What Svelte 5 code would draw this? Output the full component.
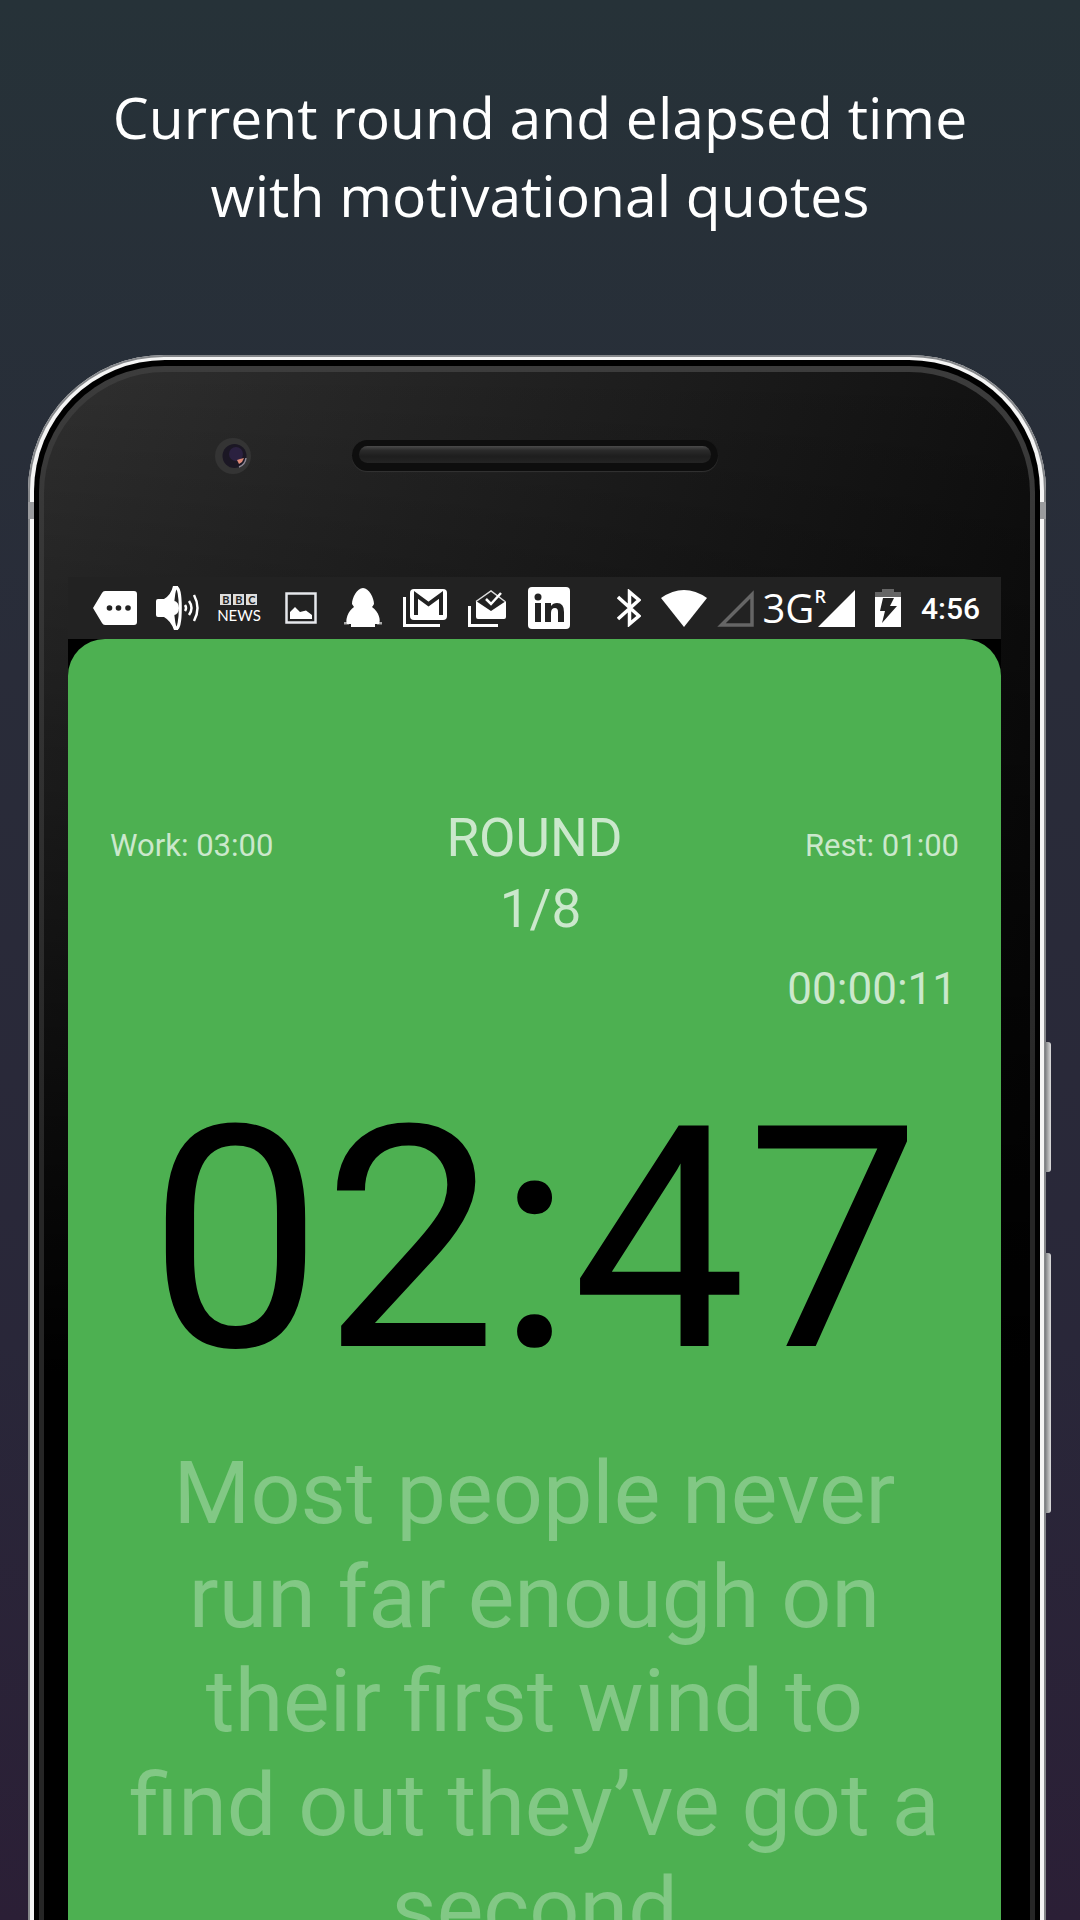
<script>
  const headline = ['Current round and elapsed time', 'with motivational quotes'];
  const quote = ['Most people never', 'run far enough on', 'their first wind to', 'find out they’ve got a', 'second'];
</script>

<main class="page">
  <h1 class="headline">
    {#each headline as line}<span>{line}</span>{/each}
  </h1>

  <div class="device">
    <i class="key power"></i>
    <i class="key volume"></i>
    <i class="seam left"></i>
    <i class="seam right"></i>
    <div class="metal">
      <div class="gasket">
        <div class="lip">
          <div class="face">
            <div class="top">
              <svg class="camera" viewBox="0 0 38 38" aria-hidden="true">
                <circle cx="19" cy="19" r="18" fill="#343434" />
                <circle cx="20.500" cy="19" r="12" fill="#1b1724" />
                <circle cx="22" cy="17" r="7" fill="#2b2140" />
                <path d="M32 21a11 11 0 0 1-7 9" fill="none" stroke="#8d8896" stroke-width="1.500" />
                <path d="M23 23l3-1 4-1-2 4-3 2z" fill="#e08a78" />
              </svg>
              <div class="speaker"><div class="grille"></div></div>
            </div>

            <div class="screen">
              <header class="status">
                <div class="notices">
                  <svg width="44" height="34" viewBox="0 0 44 34" aria-label="Messages">
                    <path d="M12 0H41a3 3 0 0 1 3 3V31a3 3 0 0 1-3 3H12Q10 34 9 32L0 17 9 2Q10 0 12 0Z" fill="#fff" />
                    <circle cx="16.500" cy="17" r="2.800" fill="#222" /><circle cx="25.500" cy="17" r="2.800" fill="#222" /><circle cx="35" cy="17" r="2.800" fill="#222" />
                  </svg>
                  <svg width="43" height="44" viewBox="0 0 43 44" aria-label="Sound">
                    <path d="M0 15Q0 13 2 13H8Q15 9 17 0H22V44H18Q15 35 8 31H2Q0 31 0 29Z" fill="#fff" />
                    <ellipse cx="20.500" cy="22" rx="3.800" ry="20.500" fill="#222" stroke="#fff" stroke-width="3" />
                    <path d="M18 15a5 7 0 0 1 0 14z" fill="#fff" />
                    <path d="M29 19q2 3 0 6M33 15q5 7 0 14M38 9q7 13 0 26" fill="none" stroke="#fff" stroke-width="2.500" />
                  </svg>
                  <div class="bbc"><span class="blocks"><b>B</b><b>B</b><b>C</b></span><span class="news">NEWS</span></div>
                  <svg width="32" height="32" viewBox="0 0 32 32" aria-label="Picture">
                    <rect x="1.500" y="1.500" width="29" height="29" fill="none" stroke="#e6e8ec" stroke-width="2.500" />
                    <path d="M5 27V20L10 15 15 20 21 18.500 27 23V27Z" fill="#fff" />
                  </svg>
                  <svg width="38" height="40" viewBox="0 0 38 40" aria-label="Snow figure">
                    <path d="M0 34H5V36.500H0ZM33 34H38V36.500H33Z" fill="#aaa" />
                    <path d="M19 0C25 0 30 10 30 16Q29 18 28 19C35 24 37 32 35 36H31V39H7V36H3C1 32 4 23 10 19L8 16C8 10 13 0 19 0Z" fill="#fff" />
                  </svg>
                  <svg width="44" height="38" viewBox="0 0 44 38" aria-label="Mail">
                    <path d="M1.500 8V36.500H37" fill="none" stroke="#fff" stroke-width="3" />
                    <rect x="7" y="0" width="37" height="31" rx="4" fill="#fff" />
                    <path d="M13 26V6L25.500 15 38 6V26" fill="none" stroke="#222" stroke-width="4" />
                  </svg>
                  <svg width="38" height="38" viewBox="0 0 38 38" aria-label="Inbox">
                    <path d="M1.500 17V36.500H30" fill="none" stroke="#fff" stroke-width="3" />
                    <path d="M8 12.500 23 2 37 12.500" fill="none" stroke="#ddd" stroke-width="1.500" />
                    <path d="M8 12 23 22 38 12V28Q38 30 36 30H10Q8 30 8 28Z" fill="#fff" />
                    <path d="M18 10l5 5L33 4" fill="none" stroke="#fff" stroke-width="2.500" />
                  </svg>
                  <svg width="42" height="42" viewBox="0 0 42 42" aria-label="LinkedIn">
                    <rect width="42" height="42" rx="4" fill="#fff" />
                    <circle cx="10" cy="10" r="3.500" fill="#222" />
                    <path d="M7 16h6v19H7zM17 16h6v3q2-3 6-3 7 0 7 9v10h-6V25q0-4-3-4-4 0-4 5v9h-6z" fill="#222" />
                  </svg>
                </div>
                <div class="system">
                  <svg width="24" height="38" viewBox="0 0 24 38" aria-label="Bluetooth">
                    <path d="M1 8 22 27 12.500 35V3L22 11 1 30" fill="none" stroke="#fff" stroke-width="3.500" />
                  </svg>
                  <svg width="46" height="37" viewBox="0 0 46 37" aria-label="Wi-Fi">
                    <path d="M0 8Q23-8 46 8L23 37Z" fill="#fff" />
                  </svg>
                  <div class="network">
                    <svg width="37" height="37" viewBox="0 0 37 37" aria-label="No signal">
                      <path d="M4.500 35H35V4.500Z" fill="none" stroke="#666" stroke-width="3.500" />
                    </svg>
                    <span class="threeg">3G</span><span class="roaming">R</span>
                    <svg class="signal" width="37" height="37" viewBox="0 0 37 37" aria-label="Signal">
                      <path d="M0 37H37V0Z" fill="#fff" />
                    </svg>
                  </div>
                  <svg width="26" height="38" viewBox="0 0 26 38" aria-label="Battery charging">
                    <path d="M0 3H7V0H19V3H26V8H0Z" fill="#666" />
                    <path d="M0 8H26V38H0Z" fill="#fff" />
                    <path d="M8 9H19L15 17H22L7 34 10 22H5Z" fill="#222" />
                  </svg>
                  <time class="clock">4:56</time>
                </div>
              </header>

              <section class="timer">
                <div class="row">
                  <span class="small">Work: 03:00</span>
                  <div class="round"><span>ROUND</span><span class="count">1/8</span></div>
                  <span class="small end">Rest: 01:00</span>
                </div>
                <time class="elapsed">00:00:11</time>
                <time class="remaining">02:47</time>
                <p class="quote">
                  {#each quote as line}<span>{line}</span>{/each}
                </p>
              </section>
            </div>
          </div>
        </div>
      </div>
    </div>
  </div>
</main>

<style>
  :global(body) { margin: 0; }
  .page {
    box-sizing: border-box;
    height: 100vh;
    overflow: hidden;
    display: flex;
    flex-direction: column;
    padding-top: 78px;
    gap: 121px;
    background: linear-gradient(#263238, #292c39 35%, #292739 70%, #2b1f36);
    font-family: Roboto, sans-serif;
    color: #fff;
  }
  .headline {
    margin: 0;
    font: 400 57px/78px "Open Sans", sans-serif;
    text-align: center;
  }
  .headline span, .quote span { display: block; }
  .device {
    flex: 1 0 auto;
    display: flex;
    position: relative;
    margin: 0 34px 0 28px;
  }
  .metal, .gasket, .lip, .face { flex: 1; display: flex; min-width: 0; }
  .metal {
    padding: 5px 6px 0;
    border-radius: 136px 136px 0 0;
    background: #f4f4f4;
    box-shadow: inset 0 0 0 2px #85878a;
  }
  .gasket { padding: 6px 5px 0; border-radius: 131px 131px 0 0; background: #000; }
  .lip { padding: 6px 5px 0; border-radius: 126px 126px 0 0; background: linear-gradient(#3c3c3c, #262626 50%); }
  .face {
    flex-direction: column;
    padding: 0 29px 0 24px;
    border-radius: 121px 121px 0 0;
    background: linear-gradient(#0000, #000 1000px), linear-gradient(105deg, #303030, #080808 90%);
  }
  .top {
    height: 205px;
    box-sizing: border-box;
    padding: 65px 0 0 146px;
    display: flex;
    align-items: flex-start;
  }
  .camera { width: 38px; height: 38px; flex: none; }
  .speaker {
    box-sizing: border-box;
    width: 366px;
    height: 31px;
    margin: 3px 0 0 100px;
    padding: 6px 7px 8px;
    border-radius: 16px;
    background: #0e0e0e;
    box-shadow: 0 1px 1px #333;
  }
  .grille { height: 100%; border-radius: 9px; background: linear-gradient(#4a4a4a, #2b2b2b 25%, #1e1e1e 60%, #242424); }
  .screen { flex: 1; display: flex; flex-direction: column; background: #000; }
  .status {
    height: 62px;
    box-sizing: border-box;
    display: flex;
    align-items: center;
    justify-content: space-between;
    padding: 0 21px 0 16px;
    background: #222;
  }
  .status svg { flex: none; }
  .notices { display: grid; grid-template-columns: repeat(8, 62px); place-items: center; }
  .system { display: flex; align-items: center; gap: 20px; }
  .bbc { display: flex; flex-direction: column; align-items: center; gap: 3px; font-family: Lato, sans-serif; }
  .blocks { display: flex; gap: 2px; }
  .blocks b { width: 11px; height: 11px; background: #ddd; color: #222; font-size: 11px; line-height: 11px; text-align: center; }
  .news { font-size: 15px; line-height: 14px; }
  .network { display: flex; align-items: center; margin-left: -10px; }
  .threeg { margin-left: 8px; font: 400 40px/44px "Open Sans", sans-serif; }
  .roaming { align-self: flex-start; font: 600 18px/20px "Open Sans", sans-serif; }
  .signal { margin-left: -8px; }
  .clock { font-size: 30px; font-weight: 500; }
  .timer {
    flex: 1;
    display: flex;
    flex-direction: column;
    padding: 164px 42px 0;
    border-radius: 37px 37px 0 0;
    background: #4db051;
  }
  .row {
    display: grid;
    grid-template-columns: 1fr auto 1fr;
    align-items: baseline;
    color: #cbe8cc;
  }
  .small { font-size: 31px; }
  .end { text-align: right; }
  .round { display: flex; flex-direction: column; font-size: 53px; line-height: 71px; text-align: center; }
  .count { padding-left: 12px; }
  .elapsed { align-self: flex-end; margin-top: 18px; padding-right: 2px; font-size: 44px; line-height: 52px; color: #cbe8cc; }
  .remaining { align-self: center; margin-top: 42px; font-size: 310px; line-height: 366px; color: #000; }
  .quote { margin: 18px 0 0; font-size: 88px; line-height: 104px; text-align: center; white-space: nowrap; color: #82c885; }
  .key { position: absolute; right: -5px; width: 6px; background: linear-gradient(90deg, #77797c, #ddd); border-radius: 0 3px 3px 0; }
  .power { top: 687px; height: 130px; }
  .volume { top: 898px; height: 260px; }
  .seam { position: absolute; top: 147px; width: 6px; height: 17px; background: #9a9b9e; }
  .left { left: 0; }
  .right { right: 0; }
</style>
